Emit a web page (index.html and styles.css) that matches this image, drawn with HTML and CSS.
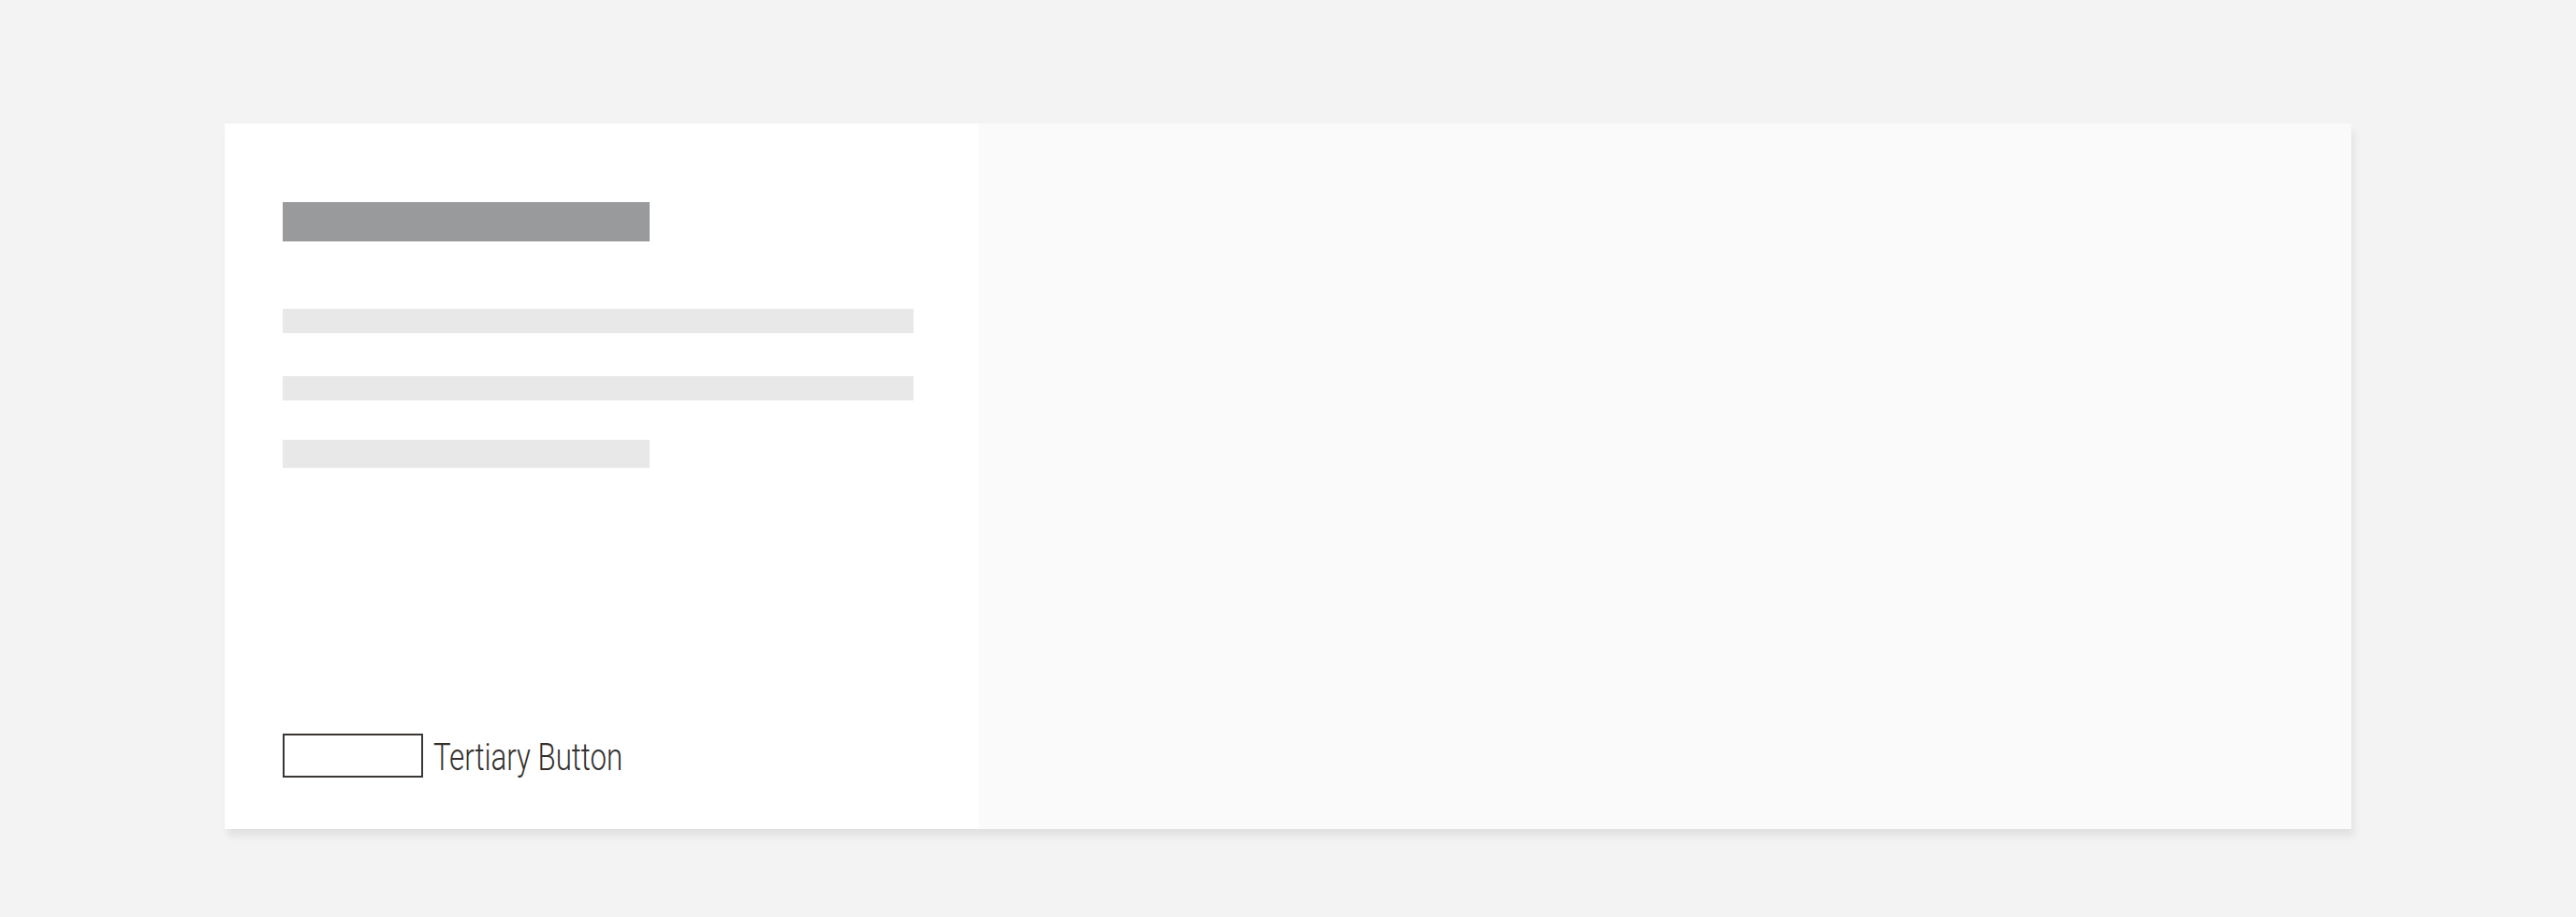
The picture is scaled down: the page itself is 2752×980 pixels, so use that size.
FILE: index.html
```html
<!DOCTYPE html>
<html lang="en">
<head>
    <meta charset="UTF-8">
    <meta name="viewport" content="width=device-width, initial-scale=1.0">
    <title>Card - Loading</title>
    <link rel="stylesheet" href="styles.css">
</head>
<body>

    <div class="card">
        <div class="card-text">
            <div class="skeleton-title"></div>
            <div class="skeleton-line"></div>
            <div class="skeleton-line"></div>
            <div class="skeleton-line short"></div>

            <div class="card-actions">
                <span class="btn-box"></span>
                <span class="btn-label">Tertiary Button</span>
            </div>
        </div>
        <div class="card-media"></div>
    </div>

</body>
</html>
```

FILE: styles.css
```css
body {
    margin: 0;
    padding: 132px 240px;
    background-color: #f3f3f3;
    font-family: Roboto, "Liberation Sans", Arial, sans-serif;
}

.card {
    display: flex;
    width: 2272px;
    height: 754px;
    background-color: #fafafa;
    box-shadow: 3px 8px 8px rgba(0, 0, 0, 0.07);
}

.card-text {
    display: flex;
    flex-direction: column;
    width: 806px;
    box-sizing: border-box;
    padding: 84px 70px 55px 62px;
    background-color: #ffffff;
}

.card-media {
    flex: 1;
    background-color: #fafafa;
}

/* placeholder blocks */
.skeleton-title {
    width: 392px;
    height: 42px;
    background-color: #999a9c;
    margin-bottom: 72px;
}

.skeleton-line {
    width: 100%;
    height: 26px;
    background-color: #e8e8e8;
    margin-bottom: 46px;
}

.skeleton-line + .skeleton-line {
    margin-bottom: 42px;
}

.skeleton-line.short {
    width: 392px;
    height: 30px;
    margin-bottom: 0;
}

.card-actions {
    margin-top: auto;
    display: flex;
    align-items: flex-end;
    gap: 11px;
}

.btn-box {
    display: block;
    width: 150px;
    height: 47px;
    box-sizing: border-box;
    border: 2px solid #3a3633;
}

/* no condensed face installed, so squeeze the light one */
.btn-label {
    font-size: 40px;
    font-weight: 300;
    line-height: 40px;
    margin-bottom: 1px;
    color: #332f2c;
    transform: scaleX(0.78);
    transform-origin: left center;
}
```
